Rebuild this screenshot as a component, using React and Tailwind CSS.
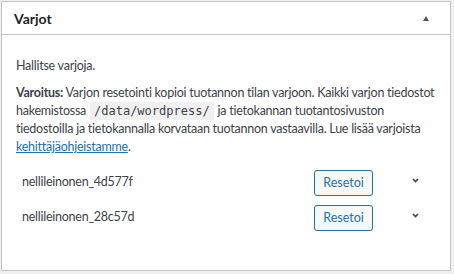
import React from "react";

const shadows = [
    { name: "nellileinonen_4d577f" },
    { name: "nellileinonen_28c57d" },
];

const App = () => {
    return (
        <div className="min-h-screen w-full bg-[#f0f0f1] pt-px pl-px font-['Lato',sans-serif] text-[12.5px] tracking-[-0.25px] text-[#3c434a]">
            <div className="w-[450px] h-[270px] border border-[#c3c4c7] bg-white">
                {/* otsikko */}
                <div className="flex h-[33px] items-center justify-between border-b border-[#c3c4c7] pl-3 pr-[21px]">
                    <h2 className="text-[14px] font-bold tracking-normal text-[#1d2327]">Varjot</h2>
                    <span className="h-0 w-0 border-x-[3.5px] border-b-[5px] border-x-transparent border-b-[#50575e]" />
                </div>

                <div className="px-[14px] pt-[21px]">
                    <p className="leading-[19px]">Hallitse varjoja.</p>
                    <p className="mt-[9px] leading-[18px] whitespace-nowrap">
                        <strong className="font-bold">Varoitus:</strong> Varjon resetointi kopioi tuotannon tilan varjoon. Kaikki varjon tiedostot
                        <br />
                        hakemistossa{" "}
                        <code className="mx-[1px] bg-[#f0f0f1] px-[4px] py-[2px] font-['DejaVu_Sans_Mono',monospace] text-[12px] tracking-normal text-[#3c434a]">/data/wordpress/</code>{" "}
                        ja tietokannan tuotantosivuston
                        <br />
                        tiedostoilla ja tietokannalla korvataan tuotannon vastaavilla. Lue lisää varjoista
                        <br />
                        <a href="#" className="text-[#2271b1] underline">kehittäjäohjeistamme</a>.
                    </p>

                    <div className="mt-[14px] flex flex-col gap-[9px]">
                        {shadows.map((s) => (
                            <div key={s.name} className="flex h-[26px] items-center pl-[6px]">
                                <span className="w-[292px] -mt-[1px]">{s.name}</span>
                                <button className="h-[26px] w-[59px] rounded-[3px] border border-[#2271b1] bg-[#f6f7f7] text-[12.5px] tracking-normal text-[#2271b1]">
                                    Resetoi
                                </button>
                                <svg className="ml-[39px] -mt-[6px]" width="7" height="5" viewBox="0 0 7 5">
                                    <path d="M1 1l2.5 2.5L6 1" fill="none" stroke="#3c434a" strokeWidth="1.6" />
                                </svg>
                            </div>
                        ))}
                    </div>
                </div>
            </div>
        </div>
    );
};

export default App;
